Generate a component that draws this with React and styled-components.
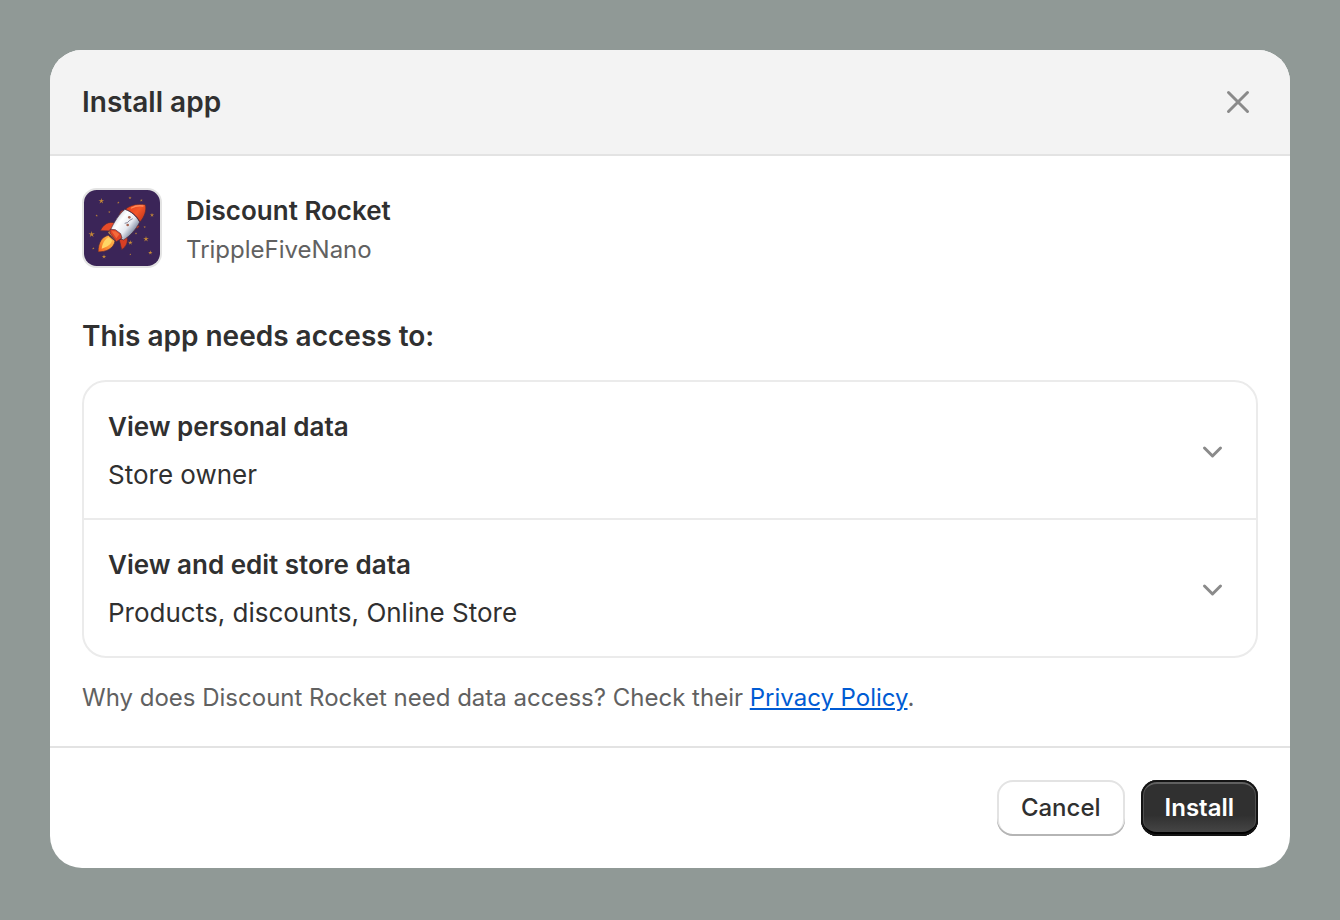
import styled, { createGlobalStyle } from "styled-components";

const permissions = [
    { title: "View personal data", detail: "Store owner" },
    { title: "View and edit store data", detail: "Products, discounts, Online Store" },
];

const stars = [
    [76, 57, 9], [47, 157, 10], [163, 182, 8], [210, 171, 9], [228, 99, 7], [223, 212, 7],
    [84, 224, 7], [162, 48, 5], [196, 55, 5], [127, 62, 4], [62, 101, 4], [100, 90, 4],
    [206, 135, 4], [52, 199, 4], [163, 217, 3], [180, 154, 4], [137, 181, 3],
];

function starPath(x, y, r) {
    const points = [];
    for (let i = 0; i < 10; i++) {
        const radius = i % 2 === 0 ? r : r * 0.32;
        const angle = (Math.PI / 5) * i - Math.PI / 2;
        points.push(`${x + radius * Math.cos(angle)},${y + radius * Math.sin(angle)}`);
    }
    return `M${points.join("L")}Z`;
}

function RocketLogo() {
    return (
        <Logo viewBox="18 18 240 240" role="img" aria-label="Discount Rocket">
            <defs>
                <linearGradient id="hull" x1="118" y1="104" x2="172" y2="146" gradientUnits="userSpaceOnUse">
                    <stop offset="0" stopColor="#cfd6e2" />
                    <stop offset="0.3" stopColor="#ffffff" />
                    <stop offset="0.7" stopColor="#e6e9f0" />
                    <stop offset="1" stopColor="#8f99ad" />
                </linearGradient>
                <linearGradient id="nose" x1="160" y1="75" x2="203" y2="110" gradientUnits="userSpaceOnUse">
                    <stop offset="0" stopColor="#e8431d" />
                    <stop offset="0.5" stopColor="#f2562a" />
                    <stop offset="1" stopColor="#c9391c" />
                </linearGradient>
                <linearGradient id="flame" x1="68" y1="209" x2="110" y2="165" gradientUnits="userSpaceOnUse">
                    <stop offset="0" stopColor="#f05c20" />
                    <stop offset="0.5" stopColor="#fb9938" />
                    <stop offset="1" stopColor="#ffb850" />
                </linearGradient>
            </defs>
            <rect x="18" y="18" width="240" height="240" rx="44" fill="#e3e3e3" />
            <rect x="24" y="24" width="228" height="228" rx="38" fill="#3b2558" />
            {stars.map(([x, y, r]) => (
                <path key={`${x}-${y}`} d={starPath(x, y, r)} fill="#c88b36" />
            ))}
            <g stroke="#4a2a3c" strokeWidth="2" strokeLinejoin="round">
                <path d="M97 160C78 165 67 180 66 210C88 210 113 201 117 177Z" fill="url(#flame)" />
                <path d="M98 166C84 174 79 187 77 200C92 196 106 188 108 175Z" fill="#ffd765" stroke="none" />
                <path d="M100 145L96 152L119 178L127 171Z" fill="#e2a04a" />
                <path d="M118 123C97 117 82 127 73 146L103 147Z" fill="#e64b29" />
                <path d="M153 164C157 180 151 194 137 203L130 174Z" fill="#d83e24" />
                <path d="M129 101L133 90L139 85L148 89Z" fill="#e64b29" />
                <path d="M184 128L190 132L187 138L178 140L172 148Z" fill="#c63c24" />
                <path d="M147 82C131 94 113 122 104 143C112 156 127 166 142 174C160 164 180 143 191 120C180 101 165 88 147 82Z" fill="url(#hull)" />
                <path d="M102 142L118 143L134 155L138 168L121 179L102 153Z" fill="#df4326" />
                <path d="M107 148L119 148L130 157L121 169Z" fill="#f36a3b" stroke="none" />
                <path d="M148 82C164 68 187 64 208 68C213 84 205 105 192 120C182 101 167 89 148 82Z" fill="url(#nose)" />
            </g>
            <path d="M166 78C177 72 190 70 201 72" fill="none" stroke="#ff8958" strokeWidth="4" strokeLinecap="round" />
            <path d="M146 124L154 122L161 115L170 110" fill="none" stroke="#55526a" strokeWidth="2" />
            <circle cx="160" cy="106" r="4" fill="#a66552" />
            <circle cx="155" cy="129" r="4" fill="#a66552" />
        </Logo>
    );
}

export default function App() {
    return (
        <>
            <GlobalStyle />
            <Backdrop>
                <Modal role="dialog" aria-labelledby="install-title">
                    <ModalHeader>
                        <Heading as="h1" id="install-title">Install app</Heading>
                        <CloseButton type="button" aria-label="Close">
                            <svg width="24" height="24" viewBox="0 0 24 24">
                                <path d="M2.5 2.5L21.5 21.5M21.5 2.5L2.5 21.5" />
                            </svg>
                        </CloseButton>
                    </ModalHeader>
                    <ModalBody>
                        <AppInfo>
                            <RocketLogo />
                            <AppText>
                                <AppName>Discount Rocket</AppName>
                                <Developer>TrippleFiveNano</Developer>
                            </AppText>
                        </AppInfo>
                        <Heading>This app needs access to:</Heading>
                        <PermissionList>
                            {permissions.map(permission => (
                                <li key={permission.title}>
                                    <PermissionButton type="button" aria-expanded="false">
                                        <PermissionText>
                                            <strong>{permission.title}</strong>
                                            <span>{permission.detail}</span>
                                        </PermissionText>
                                        <Chevron viewBox="0 0 24 24" aria-hidden="true">
                                            <path d="M4.5 9L12.5 17L20.5 9" />
                                        </Chevron>
                                    </PermissionButton>
                                </li>
                            ))}
                        </PermissionList>
                        <Note>
                            Why does Discount Rocket need data access? Check their <a href="#privacy">Privacy Policy</a>.
                        </Note>
                    </ModalBody>
                    <ModalFooter>
                        <Button type="button">Cancel</Button>
                        <Button type="button" $primary>Install</Button>
                    </ModalFooter>
                </Modal>
            </Backdrop>
        </>
    );
}

const GlobalStyle = createGlobalStyle`
* {
    box-sizing: border-box;
}
body {
    margin: 0;
    background: #909996;
    color: #303030;
    font-family: Inter, sans-serif;
    font-size: 26px;
    line-height: 42px;
}
button {
    font: inherit;
    color: inherit;
    cursor: pointer;
}
`
const Backdrop = styled.main`
min-height: 100vh;
padding: 50px;
background: #909996;
`
const Modal = styled.section`
background: #ffffff;
border-radius: 32px;
overflow: hidden;
`
const ModalHeader = styled.header`
display: flex;
align-items: center;
justify-content: space-between;
padding: 32px;
background: #f3f3f3;
border-bottom: 2px solid #e3e3e3;
`
const Heading = styled.h2`
margin: 0;
font-size: 28px;
font-weight: 600;
line-height: 40px;
`
const CloseButton = styled.button`
display: flex;
align-items: center;
justify-content: center;
width: 40px;
height: 40px;
padding: 0;
border: none;
background: none;
path {
    fill: none;
    stroke: #8a8a8a;
    stroke-width: 3;
    stroke-linecap: round;
}
`
const ModalBody = styled.div`
padding: 32px;
`
const AppInfo = styled.div`
display: flex;
align-items: center;
gap: 24px;
margin-bottom: 48px;
`
const Logo = styled.svg`
width: 80px;
height: 80px;
flex-shrink: 0;
`
const AppText = styled.div`
display: flex;
flex-direction: column;
gap: 2px;
`
const AppName = styled.h3`
margin: 0;
font-size: 26px;
font-weight: 600;
line-height: 42px;
`
const Developer = styled.p`
margin: 0;
color: #616161;
font-size: 24px;
line-height: 32px;
`
const PermissionList = styled.ul`
margin: 24px 0;
padding: 0;
list-style: none;
border: 2px solid #ebebeb;
border-radius: 24px;
li + li {
    border-top: 2px solid #ebebeb;
}
`
const PermissionButton = styled.button`
display: flex;
align-items: center;
justify-content: space-between;
width: 100%;
padding: 24px 32px 22px 24px;
border: none;
background: none;
text-align: left;
`
const PermissionText = styled.span`
display: flex;
flex-direction: column;
gap: 6px;
strong {
    font-weight: 600;
}
`
const Chevron = styled.svg`
width: 24px;
height: 24px;
path {
    fill: none;
    stroke: #8a8a8a;
    stroke-width: 3;
    stroke-linecap: round;
    stroke-linejoin: round;
}
`
const Note = styled.p`
margin: 0;
color: #616161;
font-size: 24px;
line-height: 32px;
a {
    color: #005bd3;
}
`
const ModalFooter = styled.footer`
display: flex;
justify-content: flex-end;
gap: 16px;
padding: 32px;
border-top: 2px solid #e3e3e3;
`
const Button = styled.button`
height: 56px;
padding: 0 24px;
border: none;
border-radius: 16px;
font-size: 24px;
font-weight: ${props => props.$primary ? 600 : 550};
line-height: 32px;
color: ${props => props.$primary ? "#ffffff" : "#303030"};
background: ${props => props.$primary ? "linear-gradient(180deg, #303030 63%, #4a4a4a 100%)" : "#ffffff"};
box-shadow: ${props => props.$primary
        ? "inset 0 0 0 2px #141414, inset 0 -4px 0 #000000, inset 0 4px 0 #606060, inset 0 0 0 3px #505050"
        : "inset 0 -2px 0 #b5b5b5, inset 0 0 0 2px #e3e3e3"};
`
